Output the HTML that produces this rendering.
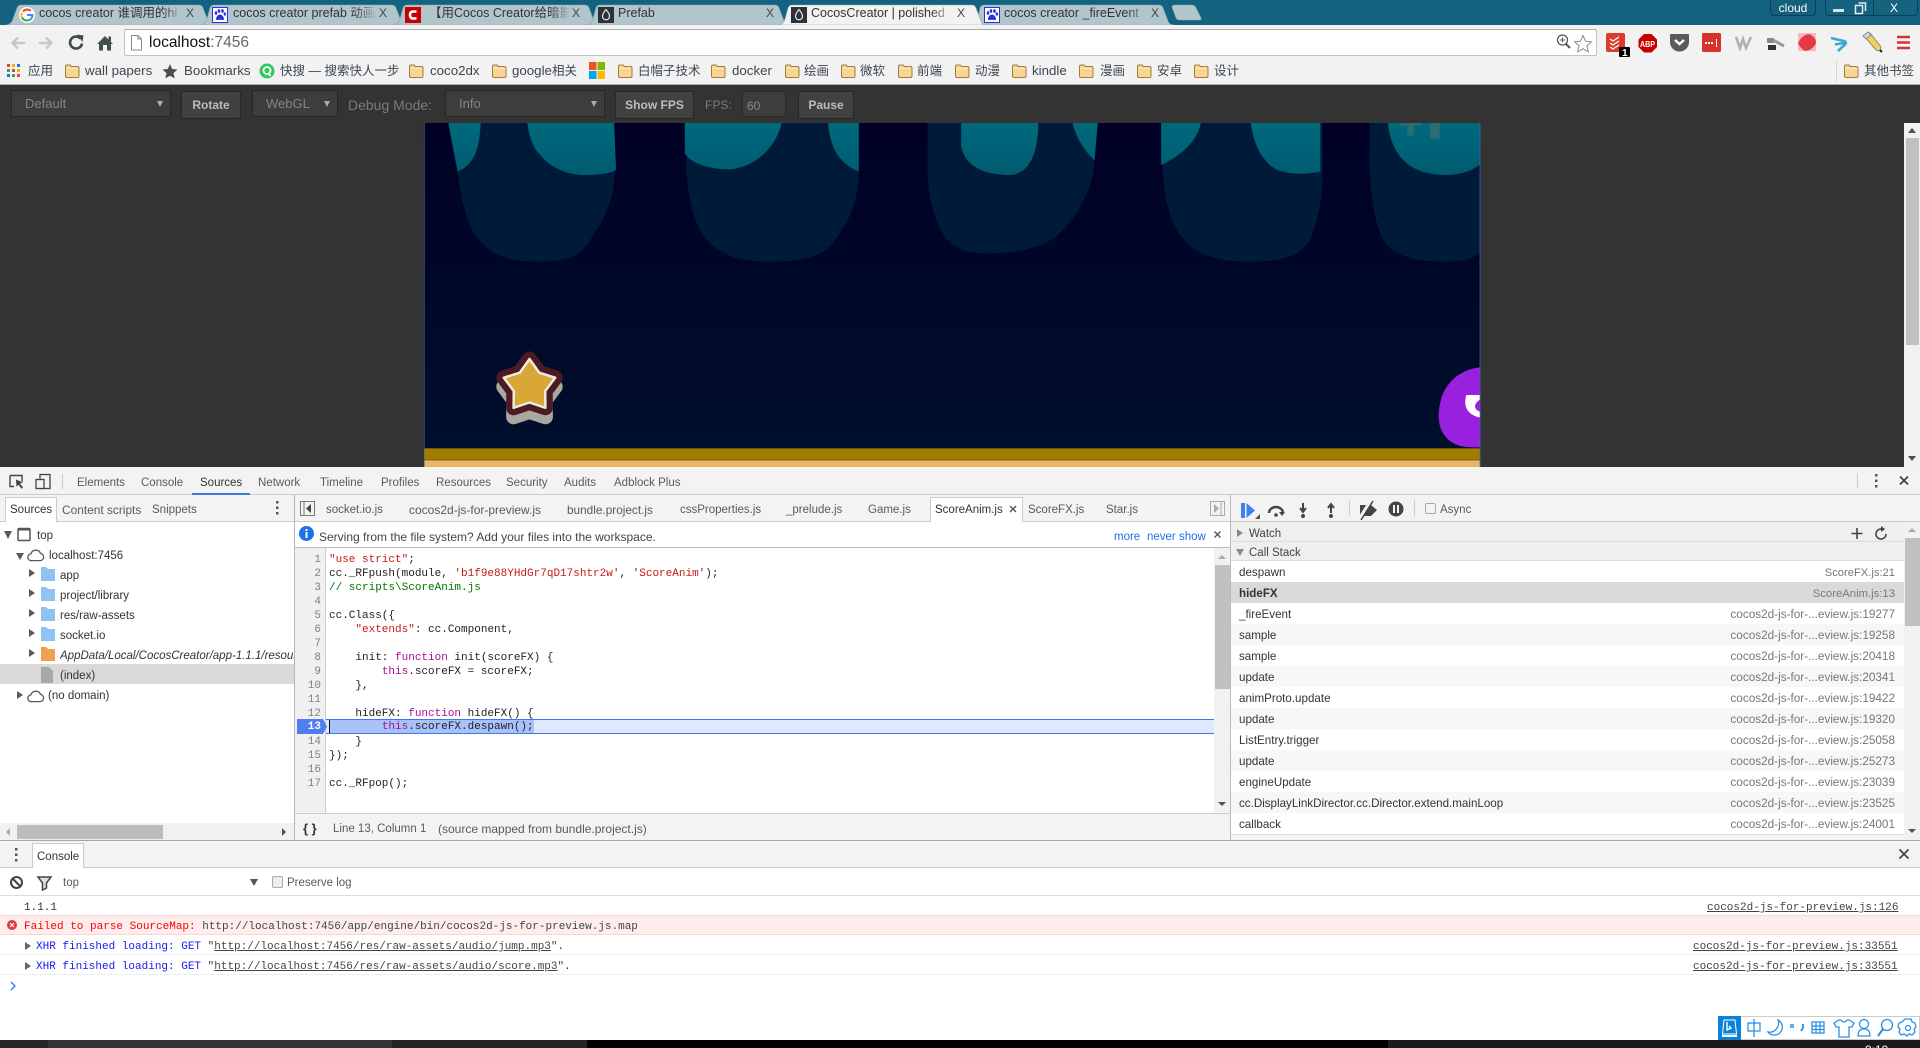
<!DOCTYPE html>
<html><head><meta charset="utf-8"><title>CocosCreator | polished</title>
<style>
html,body{margin:0;padding:0;width:1920px;height:1048px;overflow:hidden;background:#fff}
body{position:relative;font-family:"Liberation Sans","Noto Sans CJK SC",sans-serif;font-size:12px;color:#333}
.a,.t,.m{position:absolute}
.t{white-space:pre;line-height:16px;font-size:11.5px;color:#555;margin-top:1px}
.m{white-space:pre;line-height:14px;font-family:"Liberation Mono",monospace;font-size:11px;color:#222;margin-top:1px}
.b{color:#3c4650;font-size:12.5px;margin-top:0}
.bl{font-size:13.3px}
.tab{color:#333;font-size:12.5px;margin-top:0;overflow:hidden;-webkit-mask-image:linear-gradient(90deg,#000 85%,transparent);mask-image:linear-gradient(90deg,#000 85%,transparent)}
.x{color:#444;font-size:12px;margin-top:0}
.dt{color:#5a5a5a}
.btn{position:absolute;top:91px;height:26px;background:#414141;border:1px solid #262626;border-radius:2px;color:#bdbdbd;font-weight:bold;font-size:12px;line-height:27px;text-align:center;box-sizing:content-box}
.sel{position:absolute;top:90px;height:25px;background:#3d3d3d;border:1px solid #262626;color:#858585;font-size:13px;line-height:26px;padding-left:13px;box-sizing:content-box}
.sel i{position:absolute;right:7px;top:10px;width:0;height:0;border-left:3px solid transparent;border-right:3px solid transparent;border-top:6px solid #aaa}
.r{position:absolute;left:1231px;width:673px;height:21px}
.r .t{top:3px;color:#333;font-size:11.6px}
.r .l{right:9px;color:#777;font-size:11.75px}
.kw{color:#aa0d91}.st{color:#c41a16}.cm{color:#007400}
.ln{position:absolute;left:294px;width:27px;text-align:right;color:#808080;font-family:"Liberation Mono",monospace;font-size:11px;line-height:14px;margin-top:1px}
.u{text-decoration:underline}
.lk{color:#444}
</style></head>
<body>
<svg width="0" height="0" style="position:absolute">
<defs>
<symbol id="fo" viewBox="0 0 16 16"><path d="M1.500 3.500q0-1.500 1.500-1.500h3l1.500 1.500h6q1.500 0 1.500 1.500v8q0 1.500-1.500 1.500h-10.500q-1.500 0-1.500-1.500z" fill="#f7d593" stroke="#a77a3e"/><path d="M2.500 5.500h11" stroke="#fbe9c4"/></symbol>
<symbol id="paw" viewBox="0 0 16 16"><rect x=".5" y=".5" width="15" height="15" fill="#fff" stroke="#2932e1"/><g fill="#2932e1"><ellipse cx="4" cy="6" rx="1.300" ry="1.900"/><ellipse cx="7" cy="4" rx="1.300" ry="1.900"/><ellipse cx="10.500" cy="4" rx="1.300" ry="1.900"/><ellipse cx="12.800" cy="7" rx="1.200" ry="1.700"/><path d="M8 7.500c-2 0-4 2.500-4 4.500 0 1.500 2 1 4 .8 2 .2 4 .7 4-.8 0-2-2-4.500-4-4.500z"/></g></symbol>
<symbol id="coc" viewBox="0 0 16 16"><rect width="16" height="16" fill="#2c3238"/><path d="M8 2.500c-2.500 3-3.500 4.800-3.500 6.800a3.500 3.500 0 0 0 7 0c0-2-1-3.800-3.500-6.800z" fill="none" stroke="#e8e8e8" stroke-width="1.200"/></symbol>
<symbol id="cl" viewBox="0 0 16 12"><path d="M4 11a3 3 0 0 1-.5-6A4.500 4.500 0 0 1 12 4.500a3.300 3.300 0 0 1 0 6.500z" fill="none" stroke="#5a5a5a" stroke-width="1.200"/></symbol>
</defs>
</svg>

<!-- tab strip -->
<div class="a" style="left:0;top:0;width:1920px;height:25px;background:#13627f"></div>
<svg class="a" style="left:0;top:0" width="1210" height="26">
<g fill="#b1c5cc" stroke="#8fa6ae" stroke-width=".6">
<path d="M6 25 Q11 25 13 19 L17 8 Q18 5 21 5 H199 Q202 5 203 8 L208 21 Q209 25 214 25z"/>
<path d="M200 25 Q205 25 207 19 L210 8 Q211 5 214 5 H392 Q395 5 396 8 L401 21 Q402 25 407 25z"/>
<path d="M393 25 Q398 25 400 19 L403 8 Q404 5 407 5 H585 Q588 5 589 8 L594 21 Q595 25 600 25z"/>
<path d="M586 25 Q591 25 593 19 L596 8 Q597 5 600 5 H775 Q778 5 779 8 L784 21 Q785 25 790 25z"/>
<path d="M972 25 Q977 25 978 19 L980 8 Q981 5 984 5 H1159 Q1162 5 1163 8 L1168 21 Q1169 25 1174 25z"/>
<path d="M1172 7 Q1172 5 1175 5 H1192 Q1195 5 1196 8 L1201 18 Q1202 20 1199 20 H1180 Q1177 20 1176 18z"/>
</g>
<path d="M778 25 Q783 25 785 19 L788 8 Q789 5 792 5 H972 Q975 5 976 8 L981 21 Q982 25 987 25z" fill="#f2f2f2" stroke="#8fa6ae" stroke-width=".6"/>
</svg>
<svg class="a" style="left:19px;top:7px" width="16" height="16" viewBox="0 0 16 16"><circle cx="8" cy="8" r="8" fill="#fff"/><path d="M8 2.500a5.500 5.500 0 0 1 3.700 1.400" fill="none" stroke="#ea4335" stroke-width="2"/><path d="M4 4.500A5.500 5.500 0 0 1 8 2.500" fill="none" stroke="#ea4335" stroke-width="2"/><path d="M3 10.500a5.500 5.500 0 0 1 0-5" fill="none" stroke="#fbbc05" stroke-width="2"/><path d="M3 10.500a5.500 5.500 0 0 0 8.500 1.700" fill="none" stroke="#34a853" stroke-width="2"/><path d="M8 8h5.500a5.500 5.500 0 0 1-2 4.200" fill="none" stroke="#4285f4" stroke-width="2"/></svg>
<svg class="a" style="left:212px;top:7px" width="16" height="16"><use href="#paw"/></svg>
<svg class="a" style="left:405px;top:7px" width="16" height="16" viewBox="0 0 16 16"><rect width="16" height="16" fill="#c80000"/><path d="M11.500 4.500H8Q5 4.500 5 8t3 3.500h3.500" fill="none" stroke="#fff" stroke-width="2.600"/></svg>
<svg class="a" style="left:598px;top:7px" width="16" height="16"><use href="#coc"/></svg>
<svg class="a" style="left:791px;top:7px" width="16" height="16"><use href="#coc"/></svg>
<svg class="a" style="left:984px;top:7px" width="16" height="16"><use href="#paw"/></svg>
<div class="t tab" style="left:39px;top:5px;width:145px">cocos creator 谁调用的hi</div><div class="t x" style="left:186px;top:5px">X</div>
<div class="t tab" style="left:233px;top:5px;width:144px">cocos creator prefab 动画</div><div class="t x" style="left:379px;top:5px">X</div>
<div class="t tab" style="left:429px;top:5px;width:142px">【用Cocos Creator给暗影</div><div class="t x" style="left:572px;top:5px">X</div>
<div class="t tab" style="left:618px;top:5px;width:140px;-webkit-mask-image:none;mask-image:none">Prefab</div><div class="t x" style="left:766px;top:5px">X</div>
<div class="t tab" style="left:811px;top:5px;width:142px">CocosCreator | polished</div><div class="t x" style="left:957px;top:5px">X</div>
<div class="t tab" style="left:1004px;top:5px;width:145px">cocos creator _fireEvent</div><div class="t x" style="left:1151px;top:5px">X</div>
<!-- window buttons -->
<div class="a" style="left:1770px;top:-1px;width:46px;height:17px;border:1px solid #0c3f55;border-radius:0 0 4px 4px;background:#12607c;color:#fff;font-size:12px;line-height:16px;text-align:center;box-sizing:border-box">cloud</div>
<div class="a" style="left:1825px;top:-1px;width:93px;height:17px;border:1px solid #0c3f55;border-radius:0 0 4px 4px;background:#14647f;box-sizing:border-box"></div>
<div class="a" style="left:1833px;top:9px;width:11px;height:3px;background:#d8e4e8"></div>
<svg class="a" style="left:1854px;top:1px" width="14" height="14"><rect x="1.500" y="4.500" width="7" height="8" fill="none" stroke="#e4ecef" stroke-width="1.500"/><path d="M4.500 2h7v8" fill="none" stroke="#e4ecef" stroke-width="1.500"/></svg>
<div class="a" style="left:1873px;top:0;width:1px;height:15px;background:#0c3f55"></div>
<div class="t x" style="left:1890px;top:0;color:#fff;font-size:12px">X</div>

<!-- toolbar -->
<div class="a" style="left:0;top:25px;width:1920px;height:59px;background:#f2f2f2"></div>
<div class="a" style="left:0;top:84px;width:1920px;height:1px;background:#a8a8a8"></div>
<svg class="a" style="left:8px;top:33px" width="110" height="20" fill="none">
<path d="M17 10H5M10 4.500L4.500 10l5.500 5.500" stroke="#c6c6c6" stroke-width="2.600"/>
<path d="M31 10h12M38 4.500l5.500 5.500-5.500 5.500" stroke="#c9c9c9" stroke-width="2.600"/>
<path d="M72.500 5.500a6 6 0 1 0 1.500 5" stroke="#3f4b4b" stroke-width="2.600"/><path d="M69 1.500l6.500 1-1 6.500z" fill="#3f4b4b"/>
<path d="M97 3l8 8h-2v6.500h-4V12h-4v5.500h-4V11h-2z" fill="#44504f"/><rect x="100.500" y="3.500" width="2.500" height="5" fill="#44504f"/>
</svg>
<div class="a" style="left:124px;top:29px;width:1473px;height:27px;background:#fff;border:1px solid #c2c2c2;border-top-color:#a9a9a9;border-radius:2px;box-sizing:border-box"></div>
<svg class="a" style="left:130px;top:35px" width="13" height="16" fill="none"><path d="M1.500 .5h6.500l3.500 3.500v11h-10zM8 .5v3.500h3.500" stroke="#888" fill="#fff"/></svg>
<div class="t" style="left:149px;top:34px;margin-top:0;font-size:15.5px;line-height:18px;color:#111">localhost<span style="color:#666">:7456</span></div>
<svg class="a" style="left:1556px;top:33px" width="38" height="20" fill="none"><circle cx="6.500" cy="7" r="5" stroke="#555" stroke-width="1.300"/><path d="M4 7h5M6.500 4.500v5" stroke="#555"/><path d="M10 11l4 4" stroke="#555" stroke-width="2"/><path d="M27 2.500l2.500 5.700 6 .6-4.500 4 1.300 6-5.300-3.100-5.300 3.100 1.300-6-4.500-4 6-.6z" stroke="#888" fill="#fff"/></svg>
<!-- extensions -->
<svg class="a" style="left:1600px;top:28px" width="320" height="32">
<rect x="6" y="5" width="19" height="19" rx="2" fill="#dd3b2e"/><path d="M10 11l3 2 6-4M10 15l3 2 6-4M10 19l3 2 6-4" fill="none" stroke="#fff" stroke-width="1.300"/>
<rect x="19" y="19" width="11" height="10" fill="#000" rx="1"/><text x="22" y="28" fill="#fff" font-family="Liberation Sans" font-weight="bold" font-size="10">1</text>
<path d="M44 6h7.500l5.500 5.500v7.500l-5.500 5.500h-7.500l-5.500-5.500v-7.500z" fill="#c80000"/><text x="40" y="19" fill="#fff" font-family="Liberation Sans" font-weight="bold" font-size="8.500" textLength="15" lengthAdjust="spacingAndGlyphs">ABP</text>
<path d="M71 7h17v7a8.500 8.500 0 0 1-17 0z" fill="#5b5b5b" stroke="#5b5b5b" stroke-linejoin="round" stroke-width="2"/><path d="M75 12l4.500 4 4.500-4" fill="none" stroke="#fff" stroke-width="2.400"/>
<rect x="102" y="5" width="19" height="19" rx="1.500" fill="#d93229"/><g fill="#fff"><rect x="105" y="14" width="2" height="2"/><rect x="108" y="14" width="2" height="2"/><rect x="111" y="14" width="2" height="2"/><rect x="116" y="11" width="1" height="8"/></g>
<path d="M136 9l4 11 3-9 3 9 5-11" fill="none" stroke="#b0b0b0" stroke-width="2.600"/>
<rect x="167" y="10" width="7" height="5" fill="#888"/><rect x="168" y="17" width="8" height="5" fill="#333"/><path d="M173 12l11 6" stroke="#999" stroke-width="3"/>
<rect x="198" y="5" width="18" height="18" fill="#f7b9bc"/><path d="M198 15Q202 7 209 6 Q216 9 216 15 Q213 22 205 23 Q200 20 198 15z" fill="#e63946"/>
<path d="M231 10L246 13.500M235 16.500L247 14.500M238 23L246 15.500" fill="none" stroke="#3aa9d6" stroke-width="2.600"/>
<path d="M265 9l5-4 11 14-1 4-4-1z" fill="#f1d060" stroke="#8a8a8a"/><path d="M263 8l5-4 3 3-5 4z" fill="#d8d8d8" stroke="#888"/><path d="M280 22l2 2" stroke="#222" stroke-width="2"/>
<path d="M297 9h13M297 14.500h13M297 20h13" stroke="#d9322c" stroke-width="2.600"/>
</svg>

<!-- bookmarks -->
<svg class="a" style="left:7px;top:64px" width="15" height="14"><g><rect x="0" y="0" width="3" height="3" fill="#e94235"/><rect x="5" y="0" width="3" height="3" fill="#f9ab00"/><rect x="10" y="0" width="3" height="3" fill="#1a73e8"/><rect x="0" y="5" width="3" height="3" fill="#34a853"/><rect x="5" y="5" width="3" height="3" fill="#e94235"/><rect x="10" y="5" width="3" height="3" fill="#f9ab00"/><rect x="0" y="10" width="3" height="3" fill="#1a73e8"/><rect x="5" y="10" width="3" height="3" fill="#34a853"/><rect x="10" y="10" width="3" height="3" fill="#e94235"/></g></svg>
<div class="t b" style="left:28px;top:63px">应用</div>
<svg class="a" style="left:64px;top:63px" width="16" height="16"><use href="#fo"/></svg><div class="t b bl" style="left:85px;top:63px">wall papers</div>
<svg class="a" style="left:162px;top:63px" width="16" height="16"><path d="M8 1l2.200 5 5.300.5-4 3.600 1.200 5.300L8 12.700l-4.700 2.700 1.200-5.300-4-3.600 5.300-.5z" fill="#4d4d4d"/></svg><div class="t b bl" style="left:184px;top:63px">Bookmarks</div>
<svg class="a" style="left:259px;top:63px" width="16" height="16"><circle cx="8" cy="8" r="7.500" fill="#2fc95f"/><circle cx="8" cy="7.500" r="3.500" fill="none" stroke="#fff" stroke-width="1.800"/><path d="M9.500 10l2 3" stroke="#fff" stroke-width="1.800"/></svg><div class="t b" style="left:280px;top:63px">快搜 — 搜索快人一步</div>
<svg class="a" style="left:408px;top:63px" width="16" height="16"><use href="#fo"/></svg><div class="t b bl" style="left:430px;top:63px">coco2dx</div>
<svg class="a" style="left:491px;top:63px" width="16" height="16"><use href="#fo"/></svg><div class="t b" style="left:512px;top:63px"><span class="bl">google</span>相关</div>
<svg class="a" style="left:589px;top:62px" width="16" height="17"><rect width="7.500" height="8" fill="#f25022"/><rect x="8.500" width="7.500" height="8" fill="#7fba00"/><rect y="9" width="7.500" height="8" fill="#00a4ef"/><rect x="8.500" y="9" width="7.500" height="8" fill="#ffb900"/></svg>
<svg class="a" style="left:617px;top:63px" width="16" height="16"><use href="#fo"/></svg><div class="t b" style="left:638px;top:63px">白帽子技术</div>
<svg class="a" style="left:710px;top:63px" width="16" height="16"><use href="#fo"/></svg><div class="t b bl" style="left:732px;top:63px">docker</div>
<svg class="a" style="left:784px;top:63px" width="16" height="16"><use href="#fo"/></svg><div class="t b" style="left:804px;top:63px">绘画</div>
<svg class="a" style="left:840px;top:63px" width="16" height="16"><use href="#fo"/></svg><div class="t b" style="left:860px;top:63px">微软</div>
<svg class="a" style="left:897px;top:63px" width="16" height="16"><use href="#fo"/></svg><div class="t b" style="left:917px;top:63px">前端</div>
<svg class="a" style="left:954px;top:63px" width="16" height="16"><use href="#fo"/></svg><div class="t b" style="left:975px;top:63px">动漫</div>
<svg class="a" style="left:1011px;top:63px" width="16" height="16"><use href="#fo"/></svg><div class="t b bl" style="left:1032px;top:63px">kindle</div>
<svg class="a" style="left:1078px;top:63px" width="16" height="16"><use href="#fo"/></svg><div class="t b" style="left:1100px;top:63px">漫画</div>
<svg class="a" style="left:1136px;top:63px" width="16" height="16"><use href="#fo"/></svg><div class="t b" style="left:1157px;top:63px">安卓</div>
<svg class="a" style="left:1193px;top:63px" width="16" height="16"><use href="#fo"/></svg><div class="t b" style="left:1214px;top:63px">设计</div>
<div class="a" style="left:1836px;top:60px;width:1px;height:22px;background:#d8d8d8"></div>
<svg class="a" style="left:1843px;top:63px" width="16" height="16"><use href="#fo"/></svg><div class="t b" style="left:1864px;top:63px">其他书签</div>

<!-- page dark background -->
<div class="a" style="left:0;top:85px;width:1920px;height:382px;background:#333"></div>
<div class="sel" style="left:11px;width:145px">Default<i></i></div>
<div class="btn" style="left:181px;width:58px">Rotate</div>
<div class="sel" style="left:252px;width:71px">WebGL<i></i></div>
<div class="t" style="left:348px;top:96px;color:#7b7b7b;font-size:14px">Debug Mode:</div>
<div class="sel" style="left:445px;width:145px">Info<i></i></div>
<div class="btn" style="left:615px;width:77px">Show FPS</div>
<div class="t" style="left:705px;top:96px;color:#7b7b7b;font-size:12px">FPS:</div>
<div class="a" style="left:742px;top:91px;width:44px;height:26px;background:#3d3d3d;border:1px solid #2a2a2a;color:#8a8a8a;font-size:12px;line-height:28px;padding-left:4px;box-sizing:border-box">60</div>
<div class="btn" style="left:798px;width:54px">Pause</div>

<!-- game canvas -->
<svg class="a" style="left:400px;top:120px" width="1100" height="348" viewBox="0 0 1568 1044" preserveAspectRatio="none">
<defs><linearGradient id="bg" x1="0" y1="0" x2="0" y2="1"><stop offset="0" stop-color="#000025"/><stop offset="1" stop-color="#00102c"/></linearGradient>
<linearGradient id="te" gradientUnits="userSpaceOnUse" x1="0" y1="0" x2="0" y2="170"><stop offset="0" stop-color="#006b7d"/><stop offset="1" stop-color="#005a70"/></linearGradient>
<clipPath id="cv"><rect x="34" y="9" width="1506" height="1032"/></clipPath></defs>
<g clip-path="url(#cv)">
<rect x="34" y="9" width="1506" height="1032" fill="url(#bg)"/>
<g fill="#001b3a">
<path d="M82 0V150C88 250 95 320 115 365C135 410 160 425 195 425C245 425 262 400 275 345C295 290 306 220 306 150V0z"/>
<path d="M408 0V150C412 250 420 320 440 365C462 410 490 425 525 425C585 425 610 400 625 345C645 290 654 220 654 150V0z"/>
<path d="M752 0V170C756 260 765 330 785 370C800 395 820 400 845 400C890 395 920 380 940 340C970 280 990 190 990 120V0z"/>
<path d="M1087 0V150C1090 250 1100 320 1120 365C1142 410 1170 425 1210 425C1265 425 1290 400 1300 345C1310 290 1315 220 1315 160V0z"/>
<path d="M1382 0V150C1385 250 1390 320 1405 370C1420 410 1450 425 1490 425C1520 425 1535 415 1545 380V0z"/>
</g>
<g fill="url(#te)">
<path d="M68 0L82 155C105 135 114 90 115 0z"/>
<path d="M181 0C183 40 188 80 200 105C215 145 240 165 262 165C285 165 300 160 308 150L305 0z"/>
<path d="M406 0V100C415 130 440 148 470 148C515 140 540 60 545 0z"/>
<path d="M610 0C612 80 625 130 654 155V0z"/>
<path d="M800 0V80C805 130 825 165 870 165C900 160 910 90 910 0z"/>
<path d="M958 0C962 50 975 90 990 122L995 0z"/>
<path d="M1085 0V135C1120 100 1140 50 1142 0z"/>
<path d="M1212 0C1215 50 1222 100 1240 135C1255 165 1290 165 1312 155V0z"/>
<path d="M1408 0C1410 70 1425 165 1490 165C1520 165 1540 140 1545 120V0z"/>
</g>
<g fill="#2a6e72"><rect x="1426" y="9" width="30" height="8"/><rect x="1436" y="9" width="9" height="38"/><rect x="1468" y="9" width="14" height="47"/></g>
<path d="M1545 741C1510 745 1492 790 1485 830C1478 880 1478 930 1495 960C1510 985 1525 982 1545 982z" fill="#9a20e0"/>
<path d="M1540 825H1520C1515 860 1522 885 1540 893V875C1530 870 1530 850 1540 838z" fill="#fff"/>
<rect x="34" y="985" width="1506" height="33" fill="#a07c00"/>
<rect x="34" y="1018" width="1506" height="3" fill="#8f7005"/>
<rect x="34" y="1021" width="1506" height="20" fill="#ecb361"/>
<rect x="34" y="9" width="1" height="1032" fill="#4468b0"/><rect x="1539" y="9" width="1.500" height="1032" fill="#4468b0"/>
</g>
</svg>
<!-- star -->
<svg class="a" style="left:490px;top:345px" width="80" height="82" viewBox="490 345 80 82">
<g stroke-linejoin="round">
<path transform="translate(0 9)" d="M529.500 359 539.200 372.650 555.200 377.700 545.200 391.100 545.400 407.800 529.500 402.500 513.600 407.800 513.800 391.100 503.800 377.700 519.800 372.650z" fill="#a9a89f" stroke="#a9a89f" stroke-width="15"/>
<path d="M529.500 359 539.200 372.650 555.200 377.700 545.200 391.100 545.400 407.800 529.500 402.500 513.600 407.800 513.800 391.100 503.800 377.700 519.800 372.650z" fill="#4c1a22" stroke="#4c1a22" stroke-width="15"/>
<path d="M529.500 359 539.200 372.650 555.200 377.700 545.200 391.100 545.400 407.800 529.500 402.500 513.600 407.800 513.800 391.100 503.800 377.700 519.800 372.650z" fill="#d9a736" stroke="#efe9e2" stroke-width="2.500"/>
</g></svg>
<!-- page scrollbar -->
<div class="a" style="left:1904px;top:123px;width:16px;height:344px;background:#f1f1f1"></div>
<div class="a" style="left:1906px;top:138px;width:13px;height:207px;background:#c1c1c1"></div>
<div class="a" style="left:1908px;top:128px;border-left:4px solid transparent;border-right:4px solid transparent;border-bottom:5px solid #505050"></div>
<div class="a" style="left:1908px;top:456px;border-left:4px solid transparent;border-right:4px solid transparent;border-top:5px solid #505050"></div>

<!-- devtools -->
<div class="a" style="left:0;top:467px;width:1920px;height:373px;background:#f3f3f3"></div>
<div class="a" style="left:0;top:494px;width:1920px;height:1px;background:#ccc"></div>
<svg class="a" style="left:9px;top:473px" width="45" height="18" fill="none"><path d="M1 2.500h12v6M1 2.500v11h4" stroke="#444" stroke-width="1.400"/><path d="M7 6.500l7 3-3 1 3 4-1.500 1.200-3-4-2 2z" fill="#444"/><rect x="31" y="1.500" width="10" height="14" stroke="#444" stroke-width="1.300"/><rect x="27" y="6.500" width="8" height="9" fill="#f3f3f3" stroke="#444" stroke-width="1.300"/></svg>
<div class="a" style="left:62px;top:474px;width:1px;height:15px;background:#ccc"></div>
<div class="t dt" style="left:77px;top:474px">Elements</div>
<div class="t dt" style="left:141px;top:474px">Console</div>
<div class="t" style="left:200px;top:474px;color:#333">Sources</div>
<div class="t dt" style="left:258px;top:474px">Network</div>
<div class="t dt" style="left:320px;top:474px">Timeline</div>
<div class="t dt" style="left:381px;top:474px">Profiles</div>
<div class="t dt" style="left:436px;top:474px">Resources</div>
<div class="t dt" style="left:506px;top:474px">Security</div>
<div class="t dt" style="left:564px;top:474px">Audits</div>
<div class="t dt" style="left:614px;top:474px">Adblock Plus</div>
<div class="a" style="left:192px;top:493px;width:58px;height:2px;background:#3879d9"></div>
<div class="a" style="left:1857px;top:473px;width:1px;height:15px;background:#ccc"></div>
<svg class="a" style="left:1870px;top:472px" width="42" height="18"><g fill="#555"><rect x="5" y="2" width="2.500" height="2.500"/><rect x="5" y="7.500" width="2.500" height="2.500"/><rect x="5" y="13" width="2.500" height="2.500"/></g><path d="M30 4.500l8 8M38 4.500l-8 8" stroke="#444" stroke-width="1.800"/></svg>

<!-- left pane -->
<div class="a" style="left:0;top:495px;width:294px;height:345px;background:#fff"></div>
<div class="a" style="left:0;top:495px;width:294px;height:26px;background:#f3f3f3"></div>
<div class="a" style="left:0;top:521px;width:1920px;height:1px;background:#ccc"></div>
<div class="a" style="left:5px;top:497px;width:52px;height:25px;background:#fff;border:1px solid #ccc;border-bottom:0;box-sizing:border-box"></div>
<div class="t" style="left:10px;top:501px;color:#333">Sources</div>
<div class="t dt" style="left:62px;top:501px;font-size:11.9px">Content scripts</div>
<div class="t dt" style="left:152px;top:501px">Snippets</div>
<svg class="a" style="left:275px;top:500px" width="6" height="16"><g fill="#555"><rect x="1" y="1" width="2.500" height="2.500"/><rect x="1" y="6.500" width="2.500" height="2.500"/><rect x="1" y="12" width="2.500" height="2.500"/></g></svg>
<div class="a" style="left:0;top:664px;width:294px;height:20px;background:#d9d9d9"></div>
<svg class="a" style="left:0;top:525px" width="70" height="180">
<g fill="#5a5a5a">
<path d="M4 6h8l-4 8z"/><path d="M16 28h8l-4 7z"/>
<path d="M29 44v8l6-4zM29 64v8l6-4zM29 84v8l6-4zM29 104v8l6-4zM29 124v8l6-4z"/><path d="M17 166v8l6-4z"/>
</g>
<rect x="18" y="3.500" width="12" height="12" rx="1" fill="none" stroke="#555" stroke-width="1.500"/><rect x="18" y="3.500" width="12" height="2" fill="#555"/>
<path d="M41 42h5l2 2h7v12H41zM41 62h5l2 2h7v12H41zM41 82h5l2 2h7v12H41zM41 102h5l2 2h7v12H41z" fill="#8fc3f3"/>
<path d="M41 122h5l2 2h7v12H41z" fill="#f0a04f"/>
<path d="M41 142h8l4 4v12H41z" fill="#a8a8a8"/>
</svg>
<svg class="a" style="left:27px;top:548px" width="18" height="14"><use href="#cl"/></svg>
<svg class="a" style="left:27px;top:689px" width="18" height="14"><use href="#cl"/></svg>
<div class="t" style="left:37px;top:527px;color:#333">top</div>
<div class="t" style="left:49px;top:547px;color:#333">localhost:7456</div>
<div class="t" style="left:60px;top:567px;color:#333">app</div>
<div class="t" style="left:60px;top:587px;color:#333">project/library</div>
<div class="t" style="left:60px;top:607px;color:#333">res/raw-assets</div>
<div class="t" style="left:60px;top:627px;color:#333">socket.io</div>
<div class="t" style="left:60px;top:647px;color:#333;font-style:italic;width:234px;overflow:hidden">AppData/Local/CocosCreator/app-1.1.1/resources</div>
<div class="t" style="left:60px;top:667px;color:#333">(index)</div>
<div class="t" style="left:48px;top:687px;color:#333">(no domain)</div>
<div class="a" style="left:0;top:823px;width:294px;height:17px;background:#f1f1f1"></div>
<div class="a" style="left:17px;top:825px;width:146px;height:14px;background:#bdbdbd"></div>
<div class="a" style="left:6px;top:828px;border-top:4px solid transparent;border-bottom:4px solid transparent;border-right:4px solid #a8a8a8"></div>
<div class="a" style="left:282px;top:828px;border-top:4px solid transparent;border-bottom:4px solid transparent;border-left:4px solid #505050"></div>
<div class="a" style="left:294px;top:495px;width:1px;height:345px;background:#b5b5b5"></div>

<!-- editor -->
<svg class="a" style="left:300px;top:501px" width="15" height="15" fill="none"><rect x=".5" y=".5" width="14" height="14" stroke="#777"/><path d="M11 3v9l-5-4.500z" fill="#444"/><path d="M4 1v13" stroke="#777"/></svg>
<div class="t dt" style="left:326px;top:501px">socket.io.js</div>
<div class="t dt" style="left:409px;top:501px;font-size:12px">cocos2d-js-for-preview.js</div>
<div class="t dt" style="left:567px;top:501px;font-size:11.8px">bundle.project.js</div>
<div class="t dt" style="left:680px;top:501px">cssProperties.js</div>
<div class="t dt" style="left:786px;top:501px">_prelude.js</div>
<div class="t dt" style="left:868px;top:501px">Game.js</div>
<div class="a" style="left:930px;top:497px;width:93px;height:25px;background:#fff;border:1px solid #ccc;border-bottom:0;box-sizing:border-box"></div>
<div class="t" style="left:935px;top:501px;color:#333">ScoreAnim.js</div>
<svg class="a" style="left:1009px;top:505px" width="8" height="8"><path d="M1 1l6 6M7 1l-6 6" stroke="#555" stroke-width="1.400"/></svg>
<div class="t dt" style="left:1028px;top:501px">ScoreFX.js</div>
<div class="t dt" style="left:1106px;top:501px">Star.js</div>
<svg class="a" style="left:1210px;top:501px" width="16" height="15" fill="none"><rect x=".5" y=".5" width="14" height="14" stroke="#aaa"/><path d="M4 3v9l5-4.500z" fill="#aaa"/><path d="M11 1v13" stroke="#aaa"/></svg>
<div class="a" style="left:295px;top:522px;width:935px;height:25px;background:#fff"></div>
<div class="a" style="left:295px;top:547px;width:935px;height:1px;background:#bbb"></div>
<svg class="a" style="left:299px;top:526px" width="15" height="15"><circle cx="7.500" cy="7.500" r="7.500" fill="#1a73e8"/><rect x="6.500" y="6" width="2" height="6" fill="#fff"/><rect x="6.500" y="3" width="2" height="2" fill="#fff"/></svg>
<div class="t" style="left:319px;top:528px;color:#444;font-size:12px">Serving from the file system? Add your files into the workspace.</div>
<div class="t" style="left:1114px;top:528px;color:#1a73e8">more</div>
<div class="t" style="left:1147px;top:528px;color:#1a73e8">never show</div>
<svg class="a" style="left:1213px;top:530px" width="10" height="10"><path d="M1.500 1.500l6 6M7.500 1.500l-6 6" stroke="#555" stroke-width="1.400"/></svg>
<div class="a" style="left:295px;top:548px;width:919px;height:265px;background:#fff"></div>
<div class="a" style="left:295px;top:548px;width:30px;height:265px;background:#f0f0f0;border-right:1px solid #ccc;box-sizing:content-box"></div>
<div class="a" style="left:326px;top:719px;width:888px;height:15px;background:#dfe8fd;border-top:1px solid #3f76ea;border-bottom:1px solid #3f76ea;box-sizing:border-box"></div>
<div class="a" style="left:329px;top:720px;width:205px;height:13px;background:#a9c1fb"></div>
<div class="a" style="left:329px;top:720px;width:1px;height:13px;background:#111"></div>
<svg class="a" style="left:297px;top:719px" width="31" height="15"><path d="M0 0h26l4 7.500-4 7.500H0z" fill="#4e7ef0"/></svg>
<div class="ln" style="top:552px">1</div>
<div class="ln" style="top:566px">2</div>
<div class="ln" style="top:580px">3</div>
<div class="ln" style="top:594px">4</div>
<div class="ln" style="top:608px">5</div>
<div class="ln" style="top:622px">6</div>
<div class="ln" style="top:636px">7</div>
<div class="ln" style="top:650px">8</div>
<div class="ln" style="top:664px">9</div>
<div class="ln" style="top:678px">10</div>
<div class="ln" style="top:692px">11</div>
<div class="ln" style="top:706px">12</div>
<div class="ln" style="top:720px;margin-top:0;color:#fff;font-weight:bold">13</div>
<div class="ln" style="top:734px">14</div>
<div class="ln" style="top:748px">15</div>
<div class="ln" style="top:762px">16</div>
<div class="ln" style="top:776px">17</div>
<div class="m" style="left:329px;top:552px"><span class="st">"use strict"</span>;</div>
<div class="m" style="left:329px;top:566px">cc._RFpush(module, <span class="st">'b1f9e88YHdGr7qD17shtr2w'</span>, <span class="st">'ScoreAnim'</span>);</div>
<div class="m" style="left:329px;top:580px"><span class="cm">// scripts\ScoreAnim.js</span></div>
<div class="m" style="left:329px;top:608px">cc.Class({</div>
<div class="m" style="left:329px;top:622px">    <span class="st">"extends"</span>: cc.Component,</div>
<div class="m" style="left:329px;top:650px">    init: <span class="kw">function</span> init(scoreFX) {</div>
<div class="m" style="left:329px;top:664px">        <span class="kw">this</span>.scoreFX = scoreFX;</div>
<div class="m" style="left:329px;top:678px">    },</div>
<div class="m" style="left:329px;top:706px">    hideFX: <span class="kw">function</span> hideFX() {</div>
<div class="m" style="left:329px;top:720px;margin-top:0">        <span class="kw">this</span>.scoreFX.despawn();</div>
<div class="m" style="left:329px;top:734px">    }</div>
<div class="m" style="left:329px;top:748px">});</div>
<div class="m" style="left:329px;top:776px">cc._RFpop();</div>
<div class="a" style="left:1214px;top:548px;width:16px;height:265px;background:#f1f1f1"></div>
<div class="a" style="left:1215px;top:565px;width:15px;height:124px;background:#c1c1c1"></div>
<div class="a" style="left:1218px;top:555px;border-left:4px solid transparent;border-right:4px solid transparent;border-bottom:4px solid #a8a8a8"></div>
<div class="a" style="left:1218px;top:802px;border-left:4px solid transparent;border-right:4px solid transparent;border-top:4px solid #505050"></div>
<div class="a" style="left:295px;top:813px;width:935px;height:1px;background:#ccc"></div>
<div class="t" style="left:303px;top:820px;color:#333;font-weight:bold;font-size:13px">{ }</div>
<div class="t dt" style="left:333px;top:820px">Line 13, Column 1</div>
<div class="t dt" style="left:438px;top:820px;font-size:12px">(source mapped from bundle.project.js)</div>

<!-- debugger pane -->
<div class="a" style="left:1230px;top:495px;width:1px;height:345px;background:#bbb"></div>
<svg class="a" style="left:1238px;top:500px" width="190" height="20">
<rect x="3" y="3" width="4" height="15" fill="#3b82f0"/><path d="M8.500 3l8.500 7.500-8.500 7.500z" fill="#3b82f0"/><path d="M22 14v5h-5z" fill="#555"/>
<path d="M31 13a7 6 0 0 1 14 0" fill="none" stroke="#444" stroke-width="2.400"/><path d="M41 12h6l-3 4z" fill="#444"/><circle cx="38" cy="15" r="1.800" fill="#444"/>
<path d="M65 3v7M62 8l3 4 3-4" fill="none" stroke="#444" stroke-width="2"/><circle cx="65" cy="16" r="2" fill="#444"/>
<path d="M93 13V5M90 8l3-4 3 4" fill="none" stroke="#444" stroke-width="2"/><circle cx="93" cy="16" r="2" fill="#444"/>
<rect x="111" y="0" width="1" height="16" fill="#ccc"/>
<path d="M122 5h11l6 5-6 6h-11z" fill="#444"/><path d="M121 20L133 1" stroke="#f3f3f3" stroke-width="4"/><path d="M123 20L135 1" stroke="#444" stroke-width="1.500"/>
<circle cx="158" cy="9" r="7.500" fill="#444"/><rect x="155" y="5" width="2" height="8" fill="#f3f3f3"/><rect x="159" y="5" width="2" height="8" fill="#f3f3f3"/>
<rect x="176" y="0" width="1" height="16" fill="#ccc"/>
</svg>
<div class="a" style="left:1425px;top:503px;width:11px;height:11px;background:#f3f3f3;border:1px solid #aaa;border-radius:2px;box-sizing:border-box"></div>
<div class="t dt" style="left:1440px;top:501px">Async</div>
<div class="a" style="left:1231px;top:522px;width:673px;height:19px;background:#efefef;border-bottom:1px solid #ddd"></div>
<div class="a" style="left:1231px;top:542px;width:673px;height:18px;background:#efefef;border-bottom:1px solid #ddd"></div>
<div class="a" style="left:1237px;top:529px;border-top:4.500px solid transparent;border-bottom:4.500px solid transparent;border-left:6px solid #8a8a8a"></div>
<div class="a" style="left:1236px;top:549px;border-left:4.500px solid transparent;border-right:4.500px solid transparent;border-top:7px solid #8a8a8a"></div>
<div class="t" style="left:1249px;top:525px;color:#444">Watch</div>
<div class="t" style="left:1249px;top:544px;color:#444">Call Stack</div>
<svg class="a" style="left:1850px;top:526px" width="40" height="14" fill="none"><path d="M7 2v11M1.500 7.500h11" stroke="#444" stroke-width="1.600"/><path d="M34 4a5 5 0 1 0 2 4" stroke="#444" stroke-width="1.600"/><path d="M31 0l4 3-4 3z" fill="#444"/></svg>
<div class="a" style="left:1231px;top:561px;width:673px;height:273px;background:#fff"></div>
<div class="r" style="top:561px"><span class="t" style="left:8px">despawn</span><span class="t l" style="font-size:11.2px">ScoreFX.js:21</span></div>
<div class="r" style="top:582px;background:#d9d9d9"><span class="t" style="left:8px;font-weight:bold">hideFX</span><span class="t l" style="font-size:11.3px">ScoreAnim.js:13</span></div>
<div class="r" style="top:603px"><span class="t" style="left:8px">_fireEvent</span><span class="t l">cocos2d-js-for-...eview.js:19277</span></div>
<div class="r" style="top:624px;background:#f7f7f7"><span class="t" style="left:8px">sample</span><span class="t l">cocos2d-js-for-...eview.js:19258</span></div>
<div class="r" style="top:645px"><span class="t" style="left:8px">sample</span><span class="t l">cocos2d-js-for-...eview.js:20418</span></div>
<div class="r" style="top:666px;background:#f7f7f7"><span class="t" style="left:8px">update</span><span class="t l">cocos2d-js-for-...eview.js:20341</span></div>
<div class="r" style="top:687px"><span class="t" style="left:8px">animProto.update</span><span class="t l">cocos2d-js-for-...eview.js:19422</span></div>
<div class="r" style="top:708px;background:#f7f7f7"><span class="t" style="left:8px">update</span><span class="t l">cocos2d-js-for-...eview.js:19320</span></div>
<div class="r" style="top:729px"><span class="t" style="left:8px">ListEntry.trigger</span><span class="t l">cocos2d-js-for-...eview.js:25058</span></div>
<div class="r" style="top:750px;background:#f7f7f7"><span class="t" style="left:8px">update</span><span class="t l">cocos2d-js-for-...eview.js:25273</span></div>
<div class="r" style="top:771px"><span class="t" style="left:8px">engineUpdate</span><span class="t l">cocos2d-js-for-...eview.js:23039</span></div>
<div class="r" style="top:792px;background:#f7f7f7"><span class="t" style="left:8px">cc.DisplayLinkDirector.cc.Director.extend.mainLoop</span><span class="t l">cocos2d-js-for-...eview.js:23525</span></div>
<div class="r" style="top:813px"><span class="t" style="left:8px">callback</span><span class="t l">cocos2d-js-for-...eview.js:24001</span></div>
<div class="a" style="left:1231px;top:834px;width:673px;height:1px;background:#ddd"></div>
<div class="a" style="left:1904px;top:522px;width:16px;height:318px;background:#f1f1f1"></div>
<div class="a" style="left:1905px;top:538px;width:15px;height:88px;background:#c1c1c1"></div>
<div class="a" style="left:1908px;top:528px;border-left:4px solid transparent;border-right:4px solid transparent;border-bottom:4px solid #a8a8a8"></div>
<div class="a" style="left:1908px;top:829px;border-left:4px solid transparent;border-right:4px solid transparent;border-top:4px solid #505050"></div>

<!-- drawer -->
<div class="a" style="left:0;top:840px;width:1920px;height:1px;background:#a8a8a8"></div>
<div class="a" style="left:0;top:841px;width:1920px;height:26px;background:#f3f3f3"></div>
<div class="a" style="left:0;top:867px;width:1920px;height:1px;background:#ccc"></div>
<svg class="a" style="left:14px;top:847px" width="6" height="16"><g fill="#555"><rect x="1" y="1" width="2.500" height="2.500"/><rect x="1" y="6.500" width="2.500" height="2.500"/><rect x="1" y="12" width="2.500" height="2.500"/></g></svg>
<div class="a" style="left:32px;top:843px;width:52px;height:25px;background:#fff;border:1px solid #ccc;border-bottom:0;box-sizing:border-box"></div>
<div class="t" style="left:37px;top:848px;color:#333">Console</div>
<svg class="a" style="left:1898px;top:848px" width="12" height="12"><path d="M1.500 1.500l9 9M10.500 1.500l-9 9" stroke="#444" stroke-width="1.800"/></svg>
<svg class="a" style="left:9px;top:875px" width="46" height="16" fill="none"><circle cx="7.500" cy="7.500" r="5.500" stroke="#444" stroke-width="2"/><path d="M3.500 3.500l8 8" stroke="#444" stroke-width="2"/><path d="M29 2h13l-4.500 6v5l-4 2V8z" stroke="#444" stroke-width="1.500" fill="#ddd"/></svg>
<div class="t dt" style="left:63px;top:874px">top</div>
<div class="a" style="left:250px;top:879px;border-left:4.500px solid transparent;border-right:4.500px solid transparent;border-top:7px solid #555"></div>
<div class="a" style="left:272px;top:876px;width:11px;height:12px;background:#eee;border:1px solid #aaa;border-radius:2px;box-sizing:border-box"></div>
<div class="t dt" style="left:287px;top:874px">Preserve log</div>
<div class="a" style="left:0;top:895px;width:1920px;height:1px;background:#ddd"></div>
<div class="m" style="left:24px;top:900px;color:#333">1.1.1</div>
<div class="m lk u" style="left:1707px;top:900px">cocos2d-js-for-preview.js:126</div>
<div class="a" style="left:0;top:915px;width:1920px;height:20px;background:#fdeded;border-top:1px solid #f9d6d6;border-bottom:1px solid #f9d6d6;box-sizing:border-box"></div>
<svg class="a" style="left:7px;top:920px" width="10" height="10"><circle cx="5" cy="5" r="5" fill="#e0393e"/><path d="M3 3l4 4M7 3l-4 4" stroke="#fff" stroke-width="1.200"/></svg>
<div class="m" style="left:24px;top:919px;color:#f00">Failed to parse SourceMap: <span style="color:#444">http://localhost:7456/app/engine/bin/cocos2d-js-for-preview.js.map</span></div>
<div class="a" style="left:25px;top:942px;border-top:4px solid transparent;border-bottom:4px solid transparent;border-left:6px solid #666"></div>
<div class="m" style="left:36px;top:939px;color:#1a1aee">XHR finished loading: GET <span style="color:#444">"<span class="u">http://localhost:7456/res/raw-assets/audio/jump.mp3</span>"</span>.</div>
<div class="m lk u" style="left:1693px;top:939px">cocos2d-js-for-preview.js:33551</div>
<div class="a" style="left:0;top:954px;width:1920px;height:1px;background:#eee"></div>
<div class="a" style="left:25px;top:962px;border-top:4px solid transparent;border-bottom:4px solid transparent;border-left:6px solid #666"></div>
<div class="m" style="left:36px;top:959px;color:#1a1aee">XHR finished loading: GET <span style="color:#444">"<span class="u">http://localhost:7456/res/raw-assets/audio/score.mp3</span>"</span>.</div>
<div class="m lk u" style="left:1693px;top:959px">cocos2d-js-for-preview.js:33551</div>
<div class="a" style="left:0;top:974px;width:1920px;height:1px;background:#eee"></div>
<svg class="a" style="left:9px;top:981px" width="8" height="10"><path d="M2 1l4 4-4 4" fill="none" stroke="#367cf1" stroke-width="1.400"/></svg>

<!-- IME bar -->
<div class="a" style="left:1718px;top:1016px;width:202px;height:24px;background:#fff;border:1px solid #ccc;box-sizing:border-box"></div>
<div class="a" style="left:1718px;top:1016px;width:23px;height:24px;background:#0a82d8"></div>
<svg class="a" style="left:1718px;top:1016px" width="202" height="24" fill="none">
<path d="M6 4h11l1.500 14H4.500z" stroke="#fff"/><path d="M9 6v8l4-2-2-2" stroke="#fff" stroke-width="1.400"/><path d="M4 20h15" stroke="#fff" stroke-width="2"/>
<g stroke="#2b90e4" stroke-width="1.300"><rect x="30" y="7" width="12" height="8"/><path d="M36 3v18"/>
<path d="M60 4a8 8 0 1 1-10 12 9 9 0 0 0 10-12z"/>
<circle cx="74" cy="10" r="1.500"/><path d="M85 8v4l-2 3" stroke-width="1.800"/>
<rect x="94" y="6" width="12" height="11"/><path d="M94 10h12M94 13.500h12M98 6v11M102 6v11"/>
<path d="M116 7l5-3h2q1 2 3 2t3-2h2l5 3-2 4h-3v10h-10V11h-3z"/>
<circle cx="146" cy="8" r="4.500"/><path d="M140 20q0-7 6-7t6 7z"/>
<circle cx="169" cy="9" r="5.500"/><path d="M165 13l-5 7" stroke-width="2"/>
<path d="M187 3h6l1 3 3 1 1 4-2 2 1 3-3 3-3-1-2 2-3-2-3 1-2-3 1-3-2-2 1-4 3-1z"/><circle cx="190" cy="12" r="2.500"/></g>
</svg>
<!-- taskbar -->
<div class="a" style="left:0;top:1040px;width:1920px;height:8px;background:#1b1b1b"></div>
<div class="a" style="left:0;top:1040px;width:48px;height:8px;background:#252525"></div>
<div class="a" style="left:48px;top:1040px;width:344px;height:8px;background:#343434"></div>
<div class="a" style="left:392px;top:1040px;width:195px;height:8px;background:#242424"></div>
<div class="a" style="left:587px;top:1040px;width:801px;height:8px;background:#000"></div>
<div class="t x" style="left:1865px;top:1042px;color:#fff;font-size:12px">9:19</div>
</body></html>
